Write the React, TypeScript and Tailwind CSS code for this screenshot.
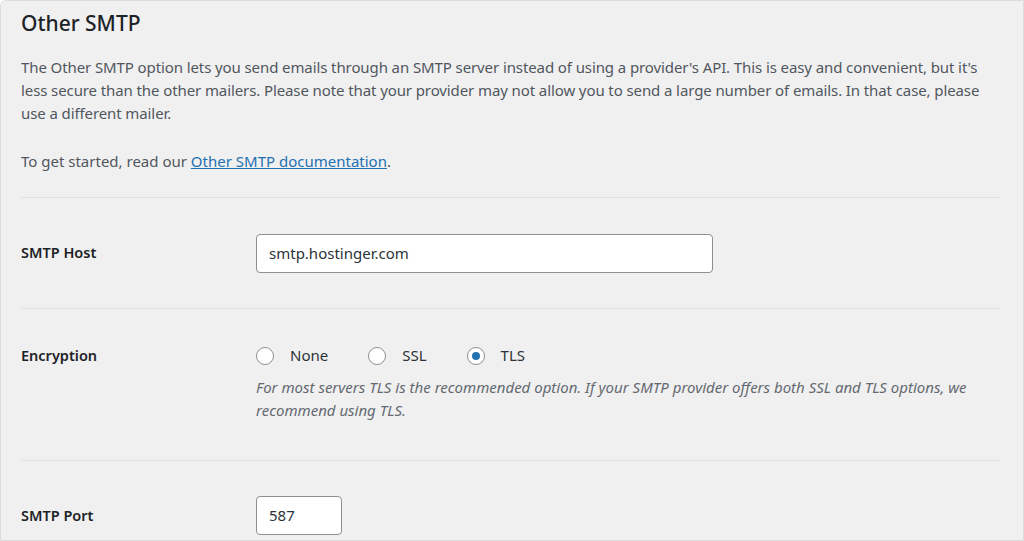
export default function App() {
  const font = { fontFamily: '"Noto Sans", "Open Sans", sans-serif' }
  return (
    <div className="w-[1024px] h-[541px] overflow-hidden bg-white" style={font}>
      <div className="h-full bg-[#f0f0f1] border border-[#dcdcde] rounded-tl-md pl-5 pr-6 text-[#50575e]">
        <h2 className="mt-[8px] text-[21px] leading-[28px] font-medium text-[#1d2327]">Other SMTP</h2>
        <p className="mt-[19px] text-[15px] leading-[23px] tracking-[-0.1px]">
          The Other SMTP option lets you send emails through an SMTP server instead of using a provider's API. This is easy and convenient, but it's less secure than the other mailers. Please note that your provider may not allow you to send a large number of emails. In that case, please use a different mailer.
        </p>
        <p className="mt-[25px] text-[15px] leading-[23px]">
          To get started, read our <a className="text-[#2271b1] underline">Other SMTP documentation</a>.
        </p>
        <div className="mt-[24px] border-t border-[#e0e0e2]" />
        <div className="flex items-center h-[110px]">
          <div className="w-[235px] text-[14.5px] font-semibold text-[#1d2327]">SMTP Host</div>
          <div className="w-[457px] h-[39px] bg-white border border-[#8c8f94] rounded-[4px] flex items-center px-3 text-[15px] text-[#2c3338]">smtp.hostinger.com</div>
        </div>
        <div className="border-t border-[#e0e0e2]" />
        <div className="flex pt-[35px] h-[151px]">
          <div className="w-[235px] text-[14.5px] font-semibold text-[#1d2327] leading-[23px]">Encryption</div>
          <div className="flex-1">
            <div className="flex items-center gap-[40px] h-[23px] text-[15px] text-[#2c3338]">
              {['None', 'SSL', 'TLS'].map((o) => (
                <label key={o} className="flex items-center gap-[16px]">
                  <span className="w-[18px] h-[18px] rounded-full border border-[#8c8f94] bg-white flex items-center justify-center">
                    {o === 'TLS' && <span className="w-[8px] h-[8px] rounded-full bg-[#2271b1]" />}
                  </span>
                  {o}
                </label>
              ))}
            </div>
            <p className="mt-[9px] italic text-[15px] leading-[23px] text-[#646970]">
              For most servers TLS is the recommended option. If your SMTP provider offers both SSL and TLS options, we recommend using TLS.
            </p>
          </div>
        </div>
        <div className="border-t border-[#e0e0e2]" />
        <div className="flex items-center pt-[35px]">
          <div className="w-[235px] text-[14.5px] font-semibold text-[#1d2327]">SMTP Port</div>
          <div className="w-[86px] h-[39px] bg-white border border-[#8c8f94] rounded-[4px] flex items-center px-3 text-[15px] text-[#2c3338]">587</div>
        </div>
      </div>
    </div>
  )
}
